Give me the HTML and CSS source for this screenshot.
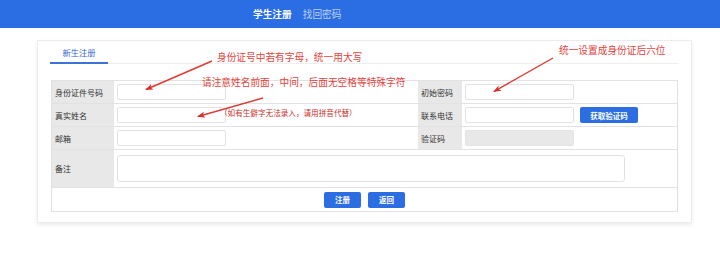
FILE: index.html
```html
<!DOCTYPE html>
<html lang="zh-CN">
<head>
    <meta charset="UTF-8">
    <meta name="viewport" content="width=device-width">
    <title>学生注册</title>
    <link rel="stylesheet" href="styles.css">
</head>
<body>
<div class="topbar">
    <div class="nav">
        <a class="nav-item active">学生注册</a>
        <a class="nav-item">找回密码</a>
    </div>
</div>
<div class="main">
    <div class="card">
        <div class="tabs">
            <span class="tab active">新生注册</span>
        </div>
        <div class="form">
            <div class="row">
                <div class="label">身份证件号码</div>
                <div class="value"><input class="ipt" type="text"></div>
                <div class="label">初始密码</div>
                <div class="value"><input class="ipt" type="text"></div>
            </div>
            <div class="row">
                <div class="label">真实姓名</div>
                <div class="value"><input class="ipt" type="text"></div>
                <div class="label">联系电话</div>
                <div class="value"><input class="ipt" type="text"><button class="btn btn-code">获取验证码</button></div>
            </div>
            <div class="row">
                <div class="label">邮箱</div>
                <div class="value"><input class="ipt" type="text"></div>
                <div class="label">验证码</div>
                <div class="value"><input class="ipt" type="text" disabled></div>
            </div>
            <div class="row row-remark">
                <div class="label">备注</div>
                <div class="value"><textarea class="remark"></textarea></div>
            </div>
            <div class="row-btns">
                <button class="btn">注册</button>
                <button class="btn">返回</button>
            </div>
        </div>
    </div>
</div>

<!-- 标注 -->
<div class="notes">
    <span class="note note-1">身份证号中若有字母，统一用大写</span>
    <span class="note note-2">请注意姓名前面，中间，后面无空格等特殊字符</span>
    <span class="note note-3">（如有生僻字无法录入，请用拼音代替）</span>
    <span class="note note-4">统一设置成身份证后六位</span>
    <svg class="arrows" width="720" height="257" viewBox="0 0 720 257">
        <defs>
            <marker id="head" markerWidth="8" markerHeight="6" refX="7" refY="3" orient="auto" markerUnits="userSpaceOnUse">
                <path d="M0,0 L8,3 L0,6 L2,3 Z" fill="#dc2f2a"/>
            </marker>
        </defs>
        <line x1="212" y1="61" x2="146" y2="89.5" stroke="#dc3a33" stroke-width="1.4" marker-end="url(#head)"/>
        <line x1="263" y1="98" x2="198" y2="116.5" stroke="#dc3a33" stroke-width="1.4" marker-end="url(#head)"/>
        <line x1="553" y1="58" x2="494" y2="91.5" stroke="#dc3a33" stroke-width="1.4" marker-end="url(#head)"/>
    </svg>
</div>
</body>
</html>
```

FILE: styles.css
```css
*{
    margin: 0;
    padding: 0;
    box-sizing: border-box;
}
html,body{
    width: 100%;
    height: 100%;
    background-color: #fff;
    font-family: "Noto Sans CJK SC", "Noto Sans", sans-serif;
    overflow: hidden;
}
.topbar{
    height: 28px;
    background-color: #2b6de2;
}
.nav{
    display: flex;
    align-items: center;
    height: 100%;
    padding-left: 253px;
    gap: 11px;
}
.nav-item{
    font-size: 9.7px;
    color: rgba(255,255,255,0.7);
    cursor: pointer;
}
.nav-item.active{
    color: #fff;
    font-weight: bold;
}
.main{
    padding-top: 12px;
    padding-left: 37px;
}
.card{
    width: 655px;
    border: 1px solid #ececec;
    box-shadow: 0 2px 4px rgba(0,0,0,0.08);
    padding: 0 12px 10px;
    background-color: #fff;
}
.tabs{
    display: flex;
    height: 23px;
    border-bottom: 1px solid #eee;
}
.tab{
    width: 58px;
    height: 23px;
    line-height: 22px;
    text-align: center;
    font-size: 8.3px;
    color: #3567cf;
    border-bottom: 2px solid #3a72d8;
}
.form{
    margin: 16px 1px 0;
    border: 1px solid #e2e2e2;
    border-bottom: none;
}
.row{
    display: grid;
    grid-template-columns: 62px 304px 44px 1fr;
    height: 23px;
    border-bottom: 1px solid #e2e2e2;
}
.row-remark{
    grid-template-columns: 62px 1fr;
    height: 38px;
}
.label{
    display: flex;
    align-items: center;
    padding-left: 3px;
    background-color: #e8e8e8;
    font-size: 8px;
    color: #333;
}
.value{
    display: flex;
    align-items: center;
    padding-left: 3px;
}
.ipt{
    width: 109px;
    height: 16px;
    border: 1px solid #e2e2e2;
    border-radius: 2px;
    outline: none;
    background-color: #fff;
}
.ipt:disabled{
    background-color: #e8e8e8;
    border-color: #e4e4e4;
}
.remark{
    width: 508px;
    height: 27px;
    border: 1px solid #e2e2e2;
    border-radius: 3px;
    resize: none;
    outline: none;
}
.row-btns{
    display: flex;
    justify-content: center;
    align-items: center;
    gap: 7px;
    height: 24px;
    border-bottom: 1px solid #e2e2e2;
}
.btn{
    width: 37px;
    height: 16px;
    border: none;
    border-radius: 2px;
    background-color: #2c6ee2;
    color: #fff;
    font-family: "Noto Sans CJK SC", sans-serif;
    font-size: 7.5px;
    font-weight: bold;
}
.btn-code{
    width: 58px;
    margin-left: 6px;
}
.notes{
    position: absolute;
    left: 0;
    top: 0;
    width: 720px;
    height: 257px;
    pointer-events: none;
}
.arrows{
    position: absolute;
    left: 0;
    top: 0;
}
.note{
    position: absolute;
    white-space: nowrap;
    line-height: 1;
    font-size: 9.7px;
    color: #e2433c;
}
.note-1{
    left: 217px;
    top: 53px;
}
.note-2{
    left: 202px;
    top: 78px;
}
.note-3{
    left: 220px;
    top: 109px;
    font-size: 7.6px;
    color: #c9302b;
}
.note-4{
    left: 559px;
    top: 46px;
}
```
